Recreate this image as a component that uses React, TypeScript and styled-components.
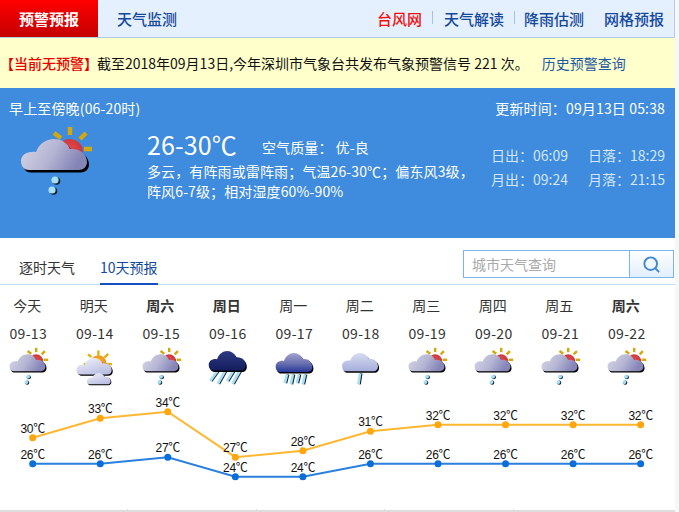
import React, { useId } from "react";
import styled, { createGlobalStyle } from "styled-components";
import { Search } from "lucide-react";

const Global = createGlobalStyle`
  html, body { margin: 0; padding: 0; background: #f7f7f7; }
  body { font-family: "Noto Sans CJK SC", "Liberation Sans", sans-serif; font-size: 14px; color: #222; }
  * { box-sizing: border-box; }
`;

const Page = styled.div`
  width: 675px;
  height: 512px;
  background: #fff;
  overflow: hidden;
`;
const Nav = styled.div`
  height: 38px;
  display: flex;
  background: #e4f0fe;
  border-bottom: 1px solid #b3cde8;
  border-right: 1px solid #b3cde8;
  font-size: 15px;
  line-height: 37px;
  font-weight: 500;
`;
const ActiveTab = styled.div`
  width: 98px;
  text-align: center;
  color: #fff;
  font-weight: 700;
  background: linear-gradient(#ff0000, #c40000);
`;
const NavTab = styled.div`
  margin-left: 19px;
  color: #14489c;
`;
const NavLinks = styled.div`
  margin-left: auto;
  display: flex;
  align-items: center;
  padding-right: 10px;
`;
const NavLink = styled.span<{ $red?: boolean; $sep?: boolean }>`
  color: ${(p) => (p.$red ? "#f01010" : "#14489c")};
  line-height: 37px;
  position: relative;
  margin-left: 20px;
  &:first-child {
    margin-right: 2px;
  }
  &::after {
    content: "";
    display: ${(p) => (p.$sep ? "block" : "none")};
    position: absolute;
    right: -11px;
    top: 11px;
    width: 1px;
    height: 13px;
    background: #a9c3df;
  }
`;
const Notice = styled.div`
  height: 50px;
  background: #ffffcc;
  color: #111;
  display: flex;
  align-items: center;
  line-height: 20px;
  white-space: pre;
`;
const NoticeTag = styled.span`
  color: #e80000;
  font-weight: 500;
  margin-right: -1px;
`;
const NoticeLink = styled.span`
  color: #1f5aa6;
  margin-left: 13px;
`;
const Panel = styled.div`
  height: 150px;
  background: #3f8bdd;
  color: #fff;
  padding: 10px 10px 0 9px;
`;
const PanelTop = styled.div`
  display: flex;
  justify-content: space-between;
  line-height: 20px;
  margin-bottom: 2px;
  letter-spacing: 0.15px;
`;
const PanelMain = styled.div`
  display: flex;
  align-items: flex-start;
`;
const Summary = styled.div`
  margin-left: 48px;
  margin-top: 8px;
  line-height: 20px;
  white-space: nowrap;
  letter-spacing: 0.12px;
`;
const TempRow = styled.div`
  height: 33px;
  display: flex;
  align-items: center;
`;
const Temp = styled.span`
  font-size: 25px;
  line-height: 33px;
  width: 115px;
`;
const Air = styled.span`
  padding-top: 5px;
`;
const AirValue = styled.span`
  margin-left: 3px;
`;
const SunGrid = styled.div`
  margin-left: auto;
  margin-top: 23px;
  display: grid;
  grid-template-columns: auto auto;
  column-gap: 20px;
  line-height: 24px;
  color: #d3e6fc;
  text-align: right;
  white-space: nowrap;
`;
const TabsRow = styled.div`
  height: 47px;
  position: relative;
  display: flex;
  align-items: flex-start;
  padding: 12px 1px 0 19px;
  border-bottom: 1px solid #c2dcf8;
`;
const Tab = styled.div<{ $active?: boolean }>`
  height: 35px;
  line-height: 34px;
  margin-right: 25px;
  color: ${(p) => (p.$active ? "#14489c" : "#333")};
  border-bottom: 2px solid ${(p) => (p.$active ? "#1450c0" : "transparent")};
`;
const SearchBox = styled.div`
  margin-left: auto;
  width: 211px;
  height: 28px;
  display: flex;
  border: 1px solid #7ab5ec;
`;
const SearchInput = styled.div`
  flex: 1;
  padding-left: 8px;
  line-height: 26px;
  color: #aaa;
`;
const SearchButton = styled.div`
  width: 44px;
  border-left: 1px solid #7ab5ec;
  background: linear-gradient(#fff, #e2effd);
  display: flex;
  align-items: center;
  justify-content: center;
  color: #3f86d6;
`;
const Days = styled.div`
  height: 105px;
  display: grid;
  grid-template-columns: repeat(10, 54.5px);
  column-gap: 12px;
`;
const Day = styled.div`
  display: flex;
  flex-direction: column;
  align-items: center;
  color: #333;
`;
const DayName = styled.div<{ $bold?: boolean }>`
  padding-top: 6px;
  line-height: 28px;
  height: 35px;
  font-weight: ${(p) => (p.$bold ? 700 : 400)};
`;
const DayDate = styled.div`
  height: 24px;
  line-height: 26px;
  letter-spacing: 0.3px;
  padding-left: 2px;
`;
const Chart = styled.svg`
  display: block;
`;
const Label = styled.text`
  font-family: "Liberation Sans", "Noto Sans CJK SC", sans-serif;
  font-size: 12px;
  letter-spacing: -0.3px;
  fill: #111;
  text-anchor: middle;
`;
const Footer = styled.div`
  display: flex;
  border-bottom: 2px solid #ddd;
`;
const FooterCell = styled.div`
  width: 128.4px;
  height: 1px;
  border-right: 1px solid #ddd;
`;

const CLOUD =
  "M20 50C14 50 12 45 12 41C12 35 18 31 27 32C30 24 37 19 45 19C53 19 59 24 61 29C71 28 78 34 78 42C78 47 74 50 70 50Z";

type Kind = "partly" | "sunny" | "heavy" | "rain" | "light";

function Cloud({ id, tf }: { id: string; tf?: string }) {
  return (
    <g transform={tf}>
      <path d={CLOUD} fill="#000" transform="translate(2 2.5)" />
      <path d={CLOUD} fill={`url(#${id})`} />
    </g>
  );
}

function Rays({ lines, color = "#d2a80c" }: { lines: number[][]; color?: string }) {
  return (
    <g stroke={color} strokeWidth={4.5}>
      {lines.map((l, i) => (
        <line key={i} x1={l[0]} y1={l[1]} x2={l[2]} y2={l[3]} />
      ))}
    </g>
  );
}

function Streaks({ lines, width = 5 }: { lines: number[][]; width?: number }) {
  return (
    <g>
      {lines.map((l, i) => (
        <g key={i}>
          <line x1={l[0] + 2} y1={l[1]} x2={l[2] + 2} y2={l[3]} stroke="#123" strokeWidth={width} />
          <line x1={l[0]} y1={l[1]} x2={l[2]} y2={l[3]} stroke="#a9e0f6" strokeWidth={width} />
        </g>
      ))}
    </g>
  );
}

function WeatherIcon({ kind, size }: { kind: Kind; size: number }) {
  const raw = useId().replace(/[^a-zA-Z0-9]/g, "");
  const a = `a${raw}`;
  const b = `b${raw}`;
  return (
    <svg width={size} height={(size * 80) / 90} viewBox="0 0 90 80">
      <defs>
        {kind === "partly" && (
          <linearGradient id={a} x1="0" y1="0" x2="1" y2="0.3">
            <stop offset="0" stopColor="#d6d6e8" />
            <stop offset="0.55" stopColor="#b6b6d4" />
            <stop offset="1" stopColor="#8585b8" />
          </linearGradient>
        )}
        {kind === "sunny" && (
          <linearGradient id={a} x1="0" y1="0" x2="0.6" y2="1">
            <stop offset="0" stopColor="#f2f2fb" />
            <stop offset="1" stopColor="#bcc0e2" />
          </linearGradient>
        )}
        {kind === "heavy" && (
          <linearGradient id={a} x1="0" y1="0" x2="0" y2="1">
            <stop offset="0" stopColor="#2c3a80" />
            <stop offset="1" stopColor="#141e5e" />
          </linearGradient>
        )}
        {kind === "rain" && (
          <linearGradient id={a} x1="0" y1="0" x2="0" y2="1">
            <stop offset="0" stopColor="#a3a3cc" />
            <stop offset="0.55" stopColor="#6a70b0" />
            <stop offset="1" stopColor="#26389a" />
          </linearGradient>
        )}
        {kind === "light" && (
          <linearGradient id={a} x1="0" y1="0" x2="0" y2="1">
            <stop offset="0" stopColor="#d8dcf2" />
            <stop offset="1" stopColor="#a4aeda" />
          </linearGradient>
        )}
        <radialGradient id={b} cx="0.5" cy="0.4" r="0.7">
          <stop offset="0" stopColor={kind === "sunny" ? "#f6c814" : "#e2484a"} />
          <stop offset="1" stopColor={kind === "sunny" ? "#ee6a20" : "#c22f36"} />
        </radialGradient>
      </defs>
      {kind === "partly" && (
        <>
          <Rays lines={[[45, 13, 52, 18], [61, 7, 61, 15], [77, 13, 71, 19], [75, 29, 83, 29]]} />
          <circle cx={61} cy={32} r={13} fill={`url(#${b})`} />
          <Cloud id={a} />
          <circle cx={47.5} cy={61} r={3.8} fill="#123" />
          <circle cx={46} cy={60} r={3.6} fill="#a5e0f8" />
          <circle cx={44.5} cy={71} r={3.8} fill="#123" />
          <circle cx={43} cy={70} r={3.6} fill="#a5e0f8" />
        </>
      )}
      {kind === "sunny" && (
        <>
          <Rays lines={[[35, 19, 41, 24], [54, 12, 54, 22], [72, 18, 65, 25], [68, 37, 79, 37], [27, 37, 34, 37]]} color="#e0b410" />
          <circle cx={54} cy={36} r={15} fill={`url(#${b})`} />
          <Cloud id={a} tf="translate(2 7) scale(0.98 0.98)" />
          <Cloud id={a} tf="translate(25 41) scale(0.66 0.66)" />
        </>
      )}
      {kind === "heavy" && (
        <>
          <Streaks lines={[[28, 50, 15, 68], [42, 50, 29, 73], [57, 50, 46, 68], [69, 50, 56, 73]]} />
          <Cloud id={a} tf="translate(0 -9) scale(1.03 1.15)" />
        </>
      )}
      {kind === "rain" && (
        <>
          <Streaks lines={[[33, 56, 29, 72], [44, 56, 40, 74], [55, 56, 51, 72], [66, 56, 62, 74]]} />
          <Cloud id={a} tf="translate(0 -5) scale(1.02 1.13)" />
        </>
      )}
      {kind === "light" && (
        <>
          <Streaks lines={[[46, 54, 43, 74]]} />
          <Cloud id={a} tf="translate(1 -4) scale(1 1.08)" />
        </>
      )}
    </svg>
  );
}

const days: { name: string; date: string; bold?: boolean; kind: Kind; hi: number; lo: number }[] = [
  { name: "今天", date: "09-13", kind: "partly", hi: 30, lo: 26 },
  { name: "明天", date: "09-14", kind: "sunny", hi: 33, lo: 26 },
  { name: "周六", date: "09-15", bold: true, kind: "partly", hi: 34, lo: 27 },
  { name: "周日", date: "09-16", bold: true, kind: "heavy", hi: 27, lo: 24 },
  { name: "周一", date: "09-17", kind: "rain", hi: 28, lo: 24 },
  { name: "周二", date: "09-18", kind: "light", hi: 31, lo: 26 },
  { name: "周三", date: "09-19", kind: "partly", hi: 32, lo: 26 },
  { name: "周四", date: "09-20", kind: "partly", hi: 32, lo: 26 },
  { name: "周五", date: "09-21", kind: "partly", hi: 32, lo: 26 },
  { name: "周六", date: "09-22", bold: true, kind: "partly", hi: 32, lo: 26 },
];

const px = (i: number) => 32.7 + i * 67.55;
const py = (t: number) => 47.7 + (30 - t) * 6.5;

function Series({ field, line, dot }: { field: "hi" | "lo"; line: string; dot: string }) {
  const points = days.map((d, i) => `${px(i)},${py(d[field])}`).join(" ");
  return (
    <g>
      <polyline points={points} fill="none" stroke={line} strokeWidth={2} />
      {days.map((d, i) => (
        <circle key={i} cx={px(i)} cy={py(d[field])} r={3.5} fill={dot} />
      ))}
      {days.map((d, i) => (
        <Label key={i} x={px(i)} y={py(d[field]) - 5}>
          {d[field]}℃
        </Label>
      ))}
    </g>
  );
}

export default function App() {
  return (
    <Page>
      <Global />
      <Nav>
        <ActiveTab>预警预报</ActiveTab>
        <NavTab>天气监测</NavTab>
        <NavLinks>
          <NavLink $red $sep>台风网</NavLink>
          <NavLink $sep>天气解读</NavLink>
          <NavLink>降雨估测</NavLink>
          <NavLink>网格预报</NavLink>
        </NavLinks>
      </Nav>
      <Notice>
        <NoticeTag>【当前无预警】</NoticeTag>
        截至2018年09月13日,今年深圳市气象台共发布气象预警信号 221 次。
        <NoticeLink>历史预警查询</NoticeLink>
      </Notice>
      <Panel>
        <PanelTop>
          <span>早上至傍晚(06-20时)</span>
          <span>更新时间：09月13日 05:38</span>
        </PanelTop>
        <PanelMain>
          <WeatherIcon kind="partly" size={90} />
          <Summary>
            <TempRow>
              <Temp>26-30℃</Temp>
              <Air>空气质量：<AirValue>优-良</AirValue></Air>
            </TempRow>
            多云，有阵雨或雷阵雨；气温26-30℃；偏东风3级，
            <br />
            阵风6-7级；相对湿度60%-90%
          </Summary>
          <SunGrid>
            <span>日出：06:09</span>
            <span>日落：18:29</span>
            <span>月出：09:24</span>
            <span>月落：21:15</span>
          </SunGrid>
        </PanelMain>
      </Panel>
      <TabsRow>
        <Tab>逐时天气</Tab>
        <Tab $active>10天预报</Tab>
        <SearchBox>
          <SearchInput>城市天气查询</SearchInput>
          <SearchButton>
            <Search size={19} strokeWidth={2.4} />
          </SearchButton>
        </SearchBox>
      </TabsRow>
      <Days>
        {days.map((d) => (
          <Day key={d.date}>
            <DayName $bold={d.bold}>{d.name}</DayName>
            <DayDate>{d.date}</DayDate>
            <WeatherIcon kind={d.kind} size={49} />
          </Day>
        ))}
      </Days>
      <Chart width={675} height={119} viewBox="0 0 675 119">
        <Series field="hi" line="#ffb732" dot="#ffa60d" />
        <Series field="lo" line="#2a80de" dot="#0a6ed8" />
      </Chart>
      <Footer>
        <FooterCell />
        <FooterCell />
        <FooterCell />
        <FooterCell />
      </Footer>
    </Page>
  );
}
